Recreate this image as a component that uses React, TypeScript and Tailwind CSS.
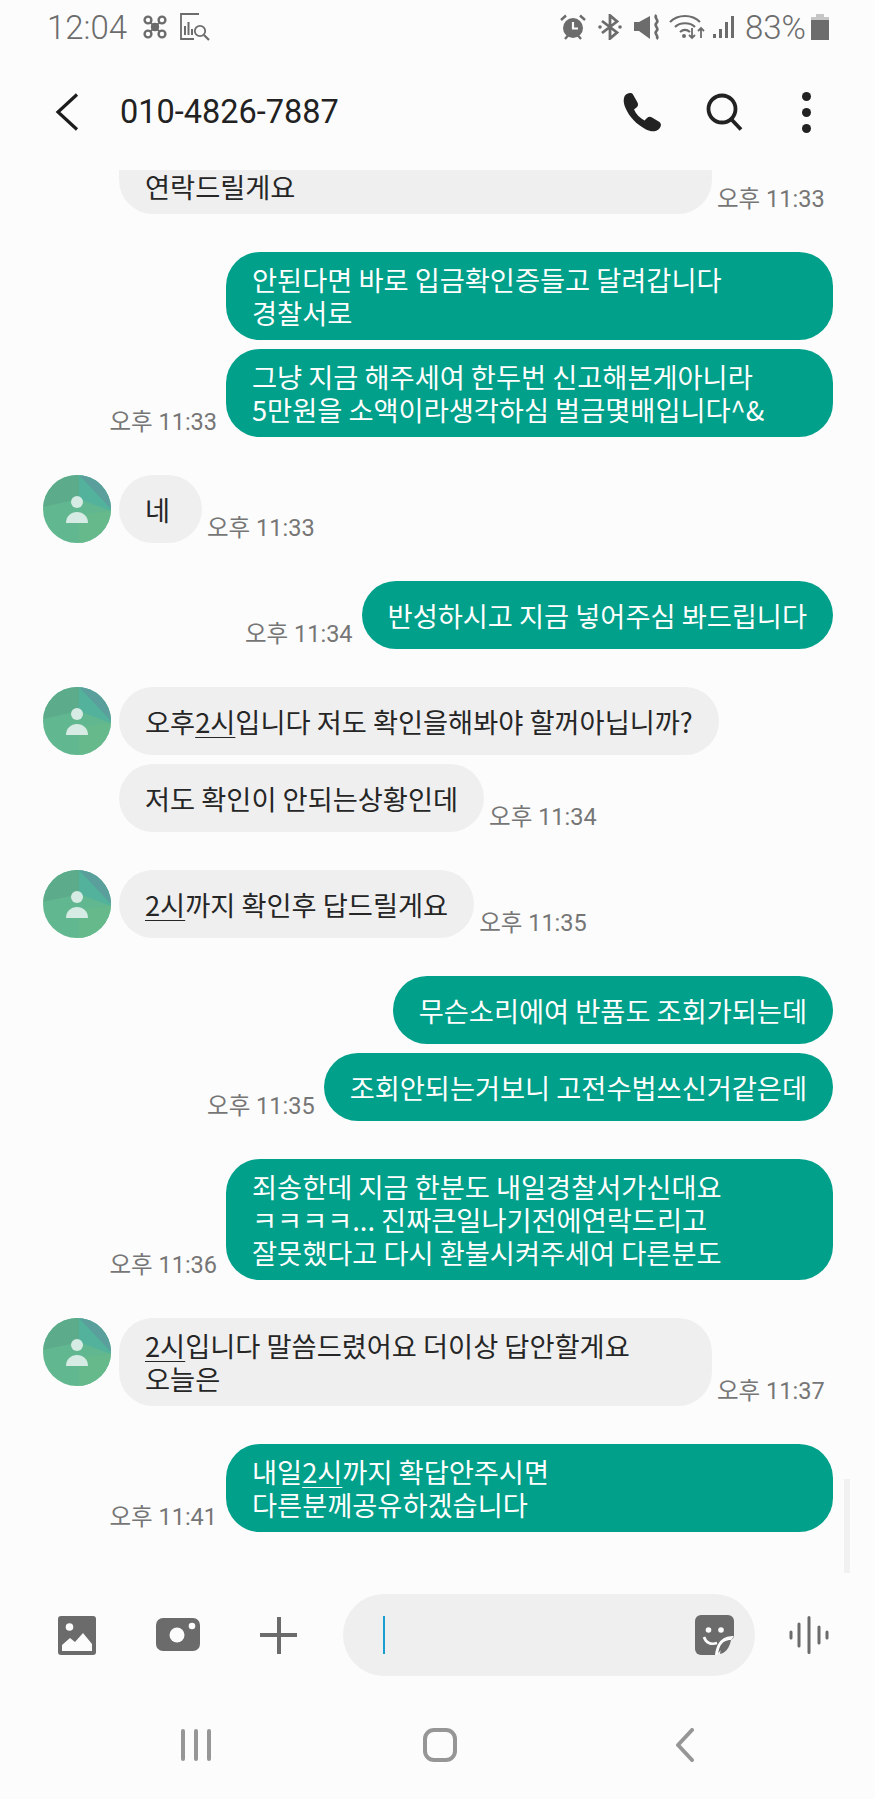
const fontKr = "font-['Roboto','Noto_Sans_CJK_KR',sans-serif]";

type Msg = {
  from: 'me' | 'them';
  lines: React.ReactNode[];
  time?: string;
  avatar?: boolean;
  group?: boolean; // follows the previous bubble closely
  wide?: boolean; // wrapped text, bubble takes the max width
};

const Two = () => <span className="underline decoration-1 underline-offset-[4px]">2시</span>;

const messages: Msg[] = [
  { from: 'them', wide: true, lines: ['\u00a0', '연락드릴게요'], time: '오후 11:33' },
  { from: 'me', wide: true, lines: ['안된다면 바로 입금확인증들고 달려갑니다', '경찰서로'] },
  { from: 'me', wide: true, group: true, lines: ['그냥 지금 해주세여 한두번 신고해본게아니라', '5만원을 소액이라생각하심 벌금몇배입니다^&'], time: '오후 11:33' },
  { from: 'them', avatar: true, lines: ['네'], time: '오후 11:33' },
  { from: 'me', lines: ['반성하시고 지금 넣어주심 봐드립니다'], time: '오후 11:34' },
  { from: 'them', avatar: true, lines: [<>오후<Two />입니다 저도 확인을해봐야 할꺼아닙니까?</>] },
  { from: 'them', group: true, lines: ['저도 확인이 안되는상황인데'], time: '오후 11:34' },
  { from: 'them', avatar: true, lines: [<><Two />까지 확인후 답드릴게요</>], time: '오후 11:35' },
  { from: 'me', lines: ['무슨소리에여 반품도 조회가되는데'] },
  { from: 'me', group: true, lines: ['조회안되는거보니 고전수법쓰신거같은데'], time: '오후 11:35' },
  { from: 'me', wide: true, lines: ['죄송한데 지금 한분도 내일경찰서가신대요', 'ㅋㅋㅋㅋ... 진짜큰일나기전에연락드리고', '잘못했다고 다시 환불시켜주세여 다른분도'], time: '오후 11:36' },
  { from: 'them', wide: true, avatar: true, lines: [<><Two />입니다 말씀드렸어요 더이상 답안할게요</>, '오늘은'], time: '오후 11:37' },
  { from: 'me', wide: true, lines: [<>내일<Two />까지 확답안주시면</>, '다른분께공유하겠습니다'], time: '오후 11:41' },
];

function Avatar() {
  return (
    <svg viewBox="0 0 68 68" className="w-[68px] h-[68px] shrink-0">
      <defs>
        <clipPath id="av">
          <circle cx="34" cy="34" r="34" />
        </clipPath>
      </defs>
      <g clipPath="url(#av)">
        <rect width="68" height="68" fill="#61b78f" />
        <polygon points="0,0 36,0 36,24 0,32" fill="#5cab8b" />
        <polygon points="36,0 68,0 68,36 36,24" fill="#52b29b" />
        <polygon points="36,0 68,0 68,34" fill="#5a9f9c" />
        <polygon points="36,68 68,68 68,36 36,40" fill="#66b98b" />
        <circle cx="34" cy="27" r="6" fill="#d6ebe3" />
        <path d="M23 48c0-7 5-11 11-11s11 4 11 11z" fill="#d6ebe3" />
      </g>
    </svg>
  );
}

function Time({ value }: { value: string }) {
  return <span className={`${fontKr} text-[23.5px] leading-[30px] text-[#767676] whitespace-nowrap shrink-0`}>{value}</span>;
}

function Row({ m }: { m: Msg }) {
  const mine = m.from === 'me';
  const bubble = (
    <div
      className={`flex flex-col justify-center min-h-[68px] min-w-[83px] px-[26px] py-[11px] rounded-[34px] font-['Noto_Sans_CJK_KR',sans-serif] text-[27.25px] leading-[33px] whitespace-nowrap shrink-0 ${
        mine ? 'bg-[#00a08a] text-white' : 'bg-[#efefef] text-[#262626]'
      } ${m.wide ? (mine ? 'w-[607px]' : 'w-[593px]') : ''}`}
    >
      {m.lines.map((l, i) => (
        <div key={i}>{l}</div>
      ))}
    </div>
  );
  return (
    <div className={`flex items-end ${m.group ? 'mt-[9px]' : 'mt-[38px]'} ${mine ? 'justify-end gap-[9px] pr-[42px]' : 'gap-[5px] pl-[43px]'}`}>
      {mine && m.time && <Time value={m.time} />}
      {!mine && (m.avatar ? <div className="mr-[3px] self-start"><Avatar /></div> : <div className="w-[71px] shrink-0" />)}
      {bubble}
      {!mine && m.time && <Time value={m.time} />}
    </div>
  );
}

function StatusBar() {
  return (
    <div className="h-[54px] flex items-center justify-between pl-[47px] pr-[46px] text-[#6c6c6c]">
      <div className="flex items-center">
        <span className="font-['Roboto',sans-serif] font-light text-[33px] leading-none">12:04</span>
        {/* cluster icon */}
        <svg viewBox="0 0 26 26" className="w-[26px] h-[26px] ml-[15px]" fill="none" stroke="#6c6c6c" strokeWidth="2.4">
          <circle cx="6" cy="6" r="3.4" />
          <circle cx="20" cy="6" r="3.4" />
          <circle cx="6" cy="20" r="3.4" />
          <circle cx="20" cy="20" r="3.4" />
          <circle cx="13" cy="13" r="3" fill="#6c6c6c" />
          <path d="M8 8l10 10M18 8L8 18" strokeWidth="1.8" />
        </svg>
        {/* report search icon */}
        <svg viewBox="0 0 32 28" className="w-[32px] h-[28px] ml-[11px]" fill="none" stroke="#6c6c6c" strokeWidth="1.8">
          <path d="M20 1H2v25h13" />
          <path d="M6 22V13M9.5 22V9M13 22v-6" strokeWidth="2" />
          <circle cx="21" cy="18" r="5.2" />
          <path d="M25 22l5 5" strokeWidth="2.2" />
        </svg>
      </div>
      <div className="flex items-center">
        {/* alarm */}
        <svg viewBox="0 0 26 26" className="w-[26px] h-[26px]">
          <circle cx="13" cy="14" r="10" fill="#6c6c6c" />
          <path d="M13 8v6.5h5" fill="none" stroke="#fcfcfc" strokeWidth="2.2" />
          <path d="M1 6l5-4.5M25 6l-5-4.5M5 25l3-3.5M21 25l-3-3.5" stroke="#6c6c6c" strokeWidth="2.4" fill="none" />
        </svg>
        {/* bluetooth */}
        <svg viewBox="0 0 24 26" className="w-[24px] h-[26px] ml-[12px]" fill="none" stroke="#6c6c6c" strokeWidth="2.8">
          <path d="M4 7l15 11.500-7 6V1.500l7 6L4 19" />
          <circle cx="2" cy="13" r="1.8" fill="#6c6c6c" stroke="none" />
          <circle cx="22" cy="13" r="1.8" fill="#6c6c6c" stroke="none" />
        </svg>
        {/* vibrate muted */}
        <svg viewBox="0 0 26 26" className="w-[26px] h-[26px] ml-[12px]">
          <path d="M0 8h5L16 2v23L5 17H0z" fill="#6c6c6c" />
          <path d="M22.500 1c-3.500 3 3.500 5 0 8s3.500 5 0 8 3.500 5 0 8" fill="none" stroke="#6c6c6c" strokeWidth="2.600" />
        </svg>
        {/* wifi */}
        <svg viewBox="0 0 36 26" className="w-[36px] h-[26px] ml-[9px]" fill="none" stroke="#6c6c6c" strokeWidth="2.2">
          <path d="M1 8c8-8 22-8 30 0M6 13c5-5 15-5 20 0M11 18c3-2.500 7-2.500 10 0" />
          <circle cx="15" cy="22" r="2" fill="#6c6c6c" stroke="none" />
          <path d="M23 14v10M20 21l3 3 3-3M32 24V14M29 17l3-3 3 3" strokeWidth="1.800" />
        </svg>
        {/* signal */}
        <svg viewBox="0 0 22 26" className="w-[22px] h-[26px] ml-[8px]" fill="#6c6c6c">
          <rect x="0" y="20" width="3" height="4" />
          <rect x="6" y="15" width="3" height="9" />
          <rect x="12" y="8" width="3" height="16" />
          <rect x="18" y="2" width="3" height="22" />
        </svg>
        <span className="font-['Roboto',sans-serif] font-light text-[33px] leading-none ml-[10px]">83%</span>
        {/* battery */}
        <div className="flex flex-col items-center w-[18px] h-[26px] ml-[5px]">
          <div className="w-[8px] h-[3px] bg-[#c6c6c6]" />
          <div className="w-full h-[3px] bg-[#c6c6c6]" />
          <div className="w-full flex-1 bg-[#6c6c6c]" />
        </div>
      </div>
    </div>
  );
}

function Header() {
  return (
    <div className="h-[116px] flex items-center pl-[55px] pr-[64px]">
      <svg viewBox="0 0 24 38" className="w-[24px] h-[38px]" fill="none" stroke="#1c1c1c" strokeWidth="3.200">
        <path d="M22 1.500L3 19l19 17.500" />
      </svg>
      <span className="ml-[41px] flex-1 font-['Roboto',sans-serif] text-[32.5px] text-[#222]">010-4826-7887</span>
      {/* call */}
      <svg viewBox="0 0 40 40" className="w-[40px] h-[40px]">
        <path
          d="M3 3.500C5 .8 9.500 0 11 2.500l4.500 8c1 2 .5 4-1 5l-2.500 2c2 4.500 5.500 8.500 10.500 11l2.500-2.500c1.500-1.500 3.500-1.500 5-.5l7.500 4.500c2 1.500 2 4.500-.5 7-3 3-8 3-13 .5C14 32 7.500 25 3.500 16 1.500 11 1 7 3 3.500z"
          fill="#222"
        />
      </svg>
      {/* search */}
      <svg viewBox="0 0 38 38" className="w-[38px] h-[38px] ml-[43px]" fill="none" stroke="#222" strokeWidth="3.800">
        <circle cx="17" cy="16" r="13.500" />
        <path d="M26 26l10 10.500" />
      </svg>
      <div className="flex flex-col gap-[7px] ml-[59px]">
        <div className="w-[9px] h-[9px] rounded-full bg-[#222]" />
        <div className="w-[9px] h-[9px] rounded-full bg-[#222]" />
        <div className="w-[9px] h-[9px] rounded-full bg-[#222]" />
      </div>
    </div>
  );
}

function Composer() {
  return (
    <div className="h-[82px] flex items-center pl-[58px]">
      {/* gallery */}
      <svg viewBox="0 0 38 39" className="w-[38px] h-[39px] shrink-0">
        <rect width="38" height="39" rx="3" fill="#6b6b6b" />
        <circle cx="11.500" cy="11" r="3.800" fill="#fcfcfc" />
        <path d="M4 35v-6l8-7 5 4 8-9 9 11v7z" fill="#fcfcfc" />
      </svg>
      {/* camera */}
      <svg viewBox="0 0 44 34" className="w-[44px] h-[34px] ml-[60px] shrink-0">
        <rect width="44" height="33" rx="7" fill="#6b6b6b" />
        <circle cx="21" cy="17" r="7.500" fill="#fcfcfc" />
        <circle cx="36" cy="8" r="3.300" fill="#fcfcfc" />
      </svg>
      {/* plus */}
      <div className="relative w-[37px] h-[37px] ml-[60px] shrink-0">
        <div className="absolute left-[16.5px] top-0 w-[4px] h-full bg-[#6b6b6b]" />
        <div className="absolute top-[16.5px] left-0 h-[4px] w-full bg-[#6b6b6b]" />
      </div>
      <div className="w-[412px] h-[82px] ml-[46px] rounded-[41px] bg-[#efefef] flex items-center justify-between pl-[40px] pr-[21px] shrink-0">
        <div className="w-[2px] h-[38px] bg-[#1a9ed0]" />
        {/* sticker */}
        <svg viewBox="0 0 39 40" className="w-[39px] h-[40px]">
          <path d="M6 0h27a6 6 0 016 6v16L21 40H6a6 6 0 01-6-6V6a6 6 0 016-6z" fill="#6b6b6b" />
          <circle cx="13.500" cy="15" r="2.800" fill="#fcfcfc" />
          <circle cx="26" cy="15" r="2.800" fill="#fcfcfc" />
          <path d="M9 22c2 6 7 8 13 6" fill="none" stroke="#fcfcfc" strokeWidth="2.600" />
          <path d="M39 21c-10 0-17 4-19 19h3c1-10 5-15 13-15z" fill="#fcfcfc" />
          <path d="M36 25c-6 1-10 5-11 14l3-1c5-3 7-8 8-13z" fill="#6b6b6b" />
        </svg>
      </div>
      {/* voice */}
      <svg viewBox="0 0 40 38" className="w-[40px] h-[38px] ml-[34px] shrink-0" stroke="#6b6b6b" strokeWidth="3" strokeLinecap="round">
        <path d="M2 16v6M10 8v22M20 1.500v35M30 11v16M38 16v6" />
      </svg>
    </div>
  );
}

function NavBar() {
  return (
    <div className="h-[123px] flex items-start pt-[52px]">
      <div className="flex items-center w-full pl-[181px] pr-[180px] justify-between">
        <div className="flex gap-[9px]">
          <div className="w-[4px] h-[32px] rounded-full bg-[#969696]" />
          <div className="w-[4px] h-[32px] rounded-full bg-[#969696]" />
          <div className="w-[4px] h-[32px] rounded-full bg-[#969696]" />
        </div>
        <div className="w-[34px] h-[34px] mr-[6px] rounded-[11px] border-[4px] border-[#969696]" />
        <svg viewBox="0 0 20 34" className="w-[20px] h-[34px]" fill="none" stroke="#969696" strokeWidth="4" strokeLinecap="round" strokeLinejoin="round">
          <path d="M17 2L3 17l14 15" />
        </svg>
      </div>
    </div>
  );
}

export default function App() {
  return (
    <div className="w-[875px] h-[1799px] bg-[#fcfcfc] flex flex-col overflow-hidden">
      <StatusBar />
      <Header />
      <div className="relative flex-1 overflow-hidden">
        {/* first bubble is scrolled under the header */}
        <div className="mt-[-82px]">
          {messages.map((m, i) => (
            <Row key={i} m={m} />
          ))}
        </div>
        {/* scrollbar */}
        <div className="absolute right-[25px] top-[1309px] w-[6px] h-[94px] bg-[#f1f1f1]" />
      </div>
      <Composer />
      <NavBar />
    </div>
  );
}
